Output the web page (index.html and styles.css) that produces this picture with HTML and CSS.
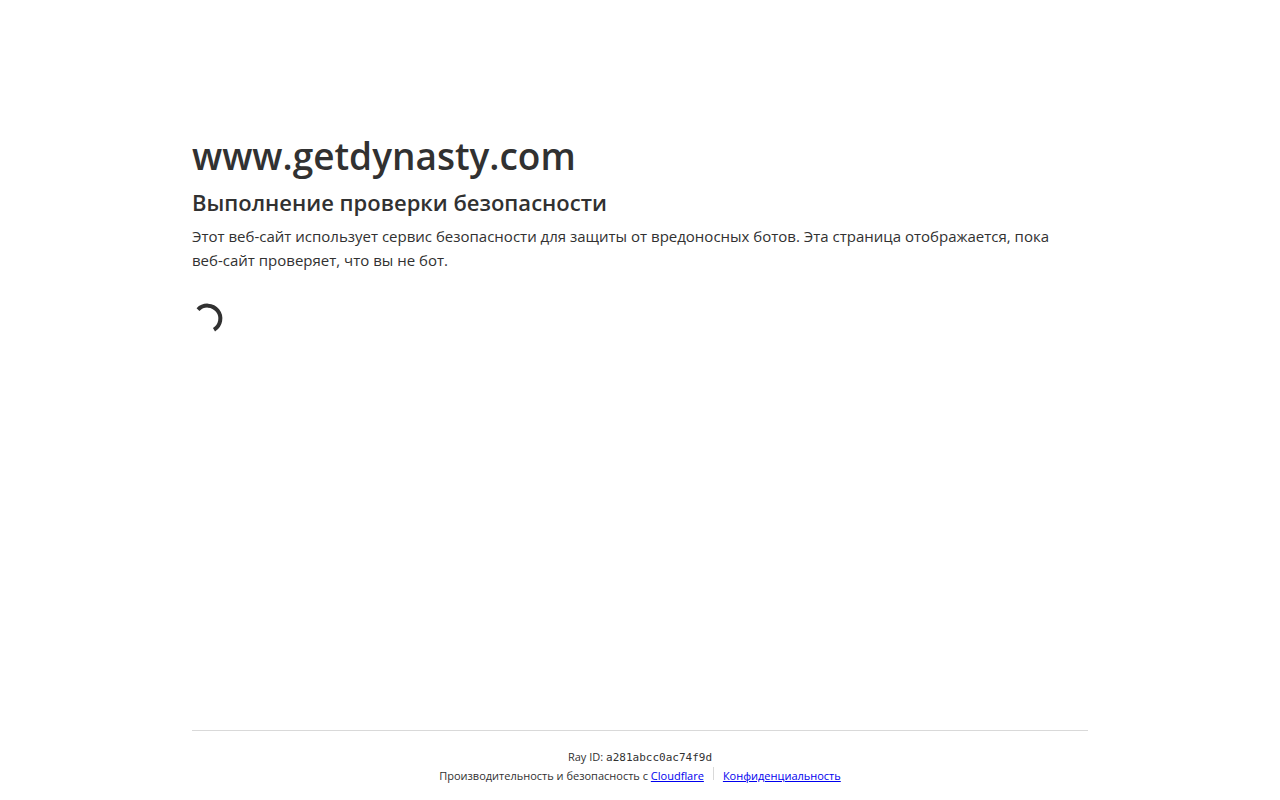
FILE: index.html
```html
<!DOCTYPE html>
<html lang="ru">
<head>
<meta charset="utf-8">
<meta name="viewport" content="width=device-width, initial-scale=1">
<title>www.getdynasty.com</title>
<link rel="stylesheet" href="styles.css">
</head>
<body>
<main class="main">
  <h1 class="title">www.getdynasty.com</h1>
  <h2 class="subtitle">Выполнение проверки безопасности</h2>
  <p class="text">Этот веб-сайт использует сервис безопасности для защиты от вредоносных ботов. Эта страница отображается, пока <span class="nowrap">веб-сайт</span> проверяет, что вы не бот.</p>
  <svg class="spinner" viewBox="0 0 32 32" role="img" aria-label="Загрузка"><path d="M6 7.6 A13 13 0 1 1 22 27.8" fill="none" stroke="#313131" stroke-width="4"/></svg>
</main>
<footer class="footer">
  <div class="ray">Ray ID: <code class="ray-id">a281abcc0ac74f9d</code></div>
  <div class="links">
    <span>Производительность и безопасность с <a href="#">Cloudflare</a></span>
    <span class="divider"></span>
    <a href="#">Конфиденциальность</a>
  </div>
</footer>
</body>
</html>
```
FILE: styles.css
```css
* { box-sizing: border-box; margin: 0; padding: 0; }
body {
  display: flex;
  flex-direction: column;
  min-height: 100vh;
  background: #fff;
  color: #313131;
  font-family: "Segoe UI", "Open Sans", "Noto Sans", sans-serif;
}
.main, .footer { width: 70%; margin: 0 auto; }
.main { flex: 1; padding-top: 128px; }
.title { font-size: 37px; font-weight: 600; line-height: 56px; }
.subtitle { font-size: 22px; font-weight: 600; line-height: 36px; }
.text { margin-top: 4px; font-size: 15px; line-height: 24px; }
.nowrap { white-space: nowrap; }
.spinner { display: block; width: 32px; height: 32px; margin-top: 30px; }
.footer {
  padding: 17px 0 15px;
  border-top: 1px solid #d9d9d9;
  text-align: center;
  font-size: 11px;
  line-height: 18px;
}
.ray-id { font-family: "DejaVu Sans Mono", monospace; font-size: 11px; }
.links { display: flex; flex-wrap: wrap; justify-content: center; gap: 0 9px; }
.divider { width: 1px; height: 13px; background: #d9d9d9; }
.footer a { color: #0000ee; }
```
